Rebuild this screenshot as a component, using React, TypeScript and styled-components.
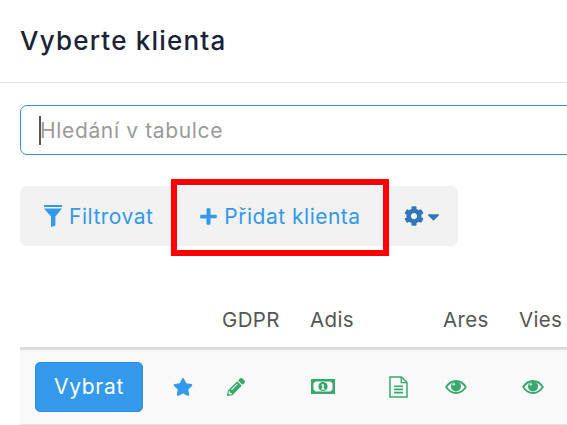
import React from 'react'
import styled, { createGlobalStyle } from 'styled-components'
import { FaCog, FaCaretDown, FaStar, FaPencilAlt } from 'react-icons/fa'

const GlobalStyle = createGlobalStyle`
  html, body {
    margin: 0;
    padding: 0;
    height: 100%;
    background: #fff;
    overflow: hidden;
  }
  body {
    font-family: Inter, "Noto Sans", sans-serif;
  }
`

const Page = styled.div`
  width: 567px;
  height: 425px;
  overflow: hidden;
`

const Header = styled.header`
  height: 82px;
  padding: 0 20px;
  display: flex;
  align-items: center;
  border-bottom: 1px solid #e3e3e3;
`

const Title = styled.h1`
  margin: 0;
  font-size: 26px;
  line-height: 1;
  font-weight: 500;
  letter-spacing: 1.2px;
  color: #1a2238;
`

const Body = styled.div`
  padding: 22px 0 0 20px;
`

const SearchBox = styled.div`
  width: 600px;
  height: 50px;
  box-sizing: border-box;
  border: 1px solid #3a8fe0;
  border-radius: 7px;
  padding: 0 18px;
  display: flex;
  align-items: center;
`

const Caret = styled.span`
  width: 2px;
  height: 29px;
  margin-right: -1px;
  background: #555;
`

const Placeholder = styled.span`
  font-size: 21px;
  letter-spacing: 0.65px;
  color: #9a9a9a;
`

const Toolbar = styled.div`
  display: inline-flex;
  margin-top: 31px;
  height: 60px;
  background: #f2f2f2;
  border-radius: 7px;
`

const ToolButton = styled.div`
  position: relative;
  display: flex;
  align-items: center;
  gap: 7px;
  padding: 0 23px 0 24px;
  font-size: 21px;
  letter-spacing: 0.5px;
  color: #3498eb;
`

const SettingsButton = styled.div`
  display: flex;
  align-items: center;
  gap: 0;
  padding: 0 15px 0 20px;
  color: #2f78b8;
`

const Highlight = styled.span`
  position: absolute;
  top: -7px;
  left: -5px;
  right: -5px;
  bottom: -10px;
  border: 6px solid #ff0000;
  pointer-events: none;
`

const Grid = styled.table`
  margin-top: 41px;
  width: 547px;
  table-layout: fixed;
  border-collapse: collapse;
`

const HeadCell = styled.th<{ $w: number }>`
  width: ${p => p.$w}px;
  box-sizing: border-box;
  height: 61px;
  padding: 0 15px 16px;
  text-align: left;
  vertical-align: bottom;
  font-size: 20.5px;
  line-height: 1;
  font-weight: 400;
  letter-spacing: 0.35px;
  color: #555;
  border-bottom: 3px solid #dcdcdc;
  white-space: nowrap;
`

const Row = styled.tr`
  background: #f9f9f9;
  border-bottom: 1px solid #e3e3e3;
`

const Cell = styled.td<{ $tone?: 'green' | 'blue'; $indent?: number }>`
  height: 74px;
  padding: 0 0 0 ${p => 15 + (p.$indent ?? 0)}px;
  color: ${p => (p.$tone === 'blue' ? '#3498eb' : '#38a96c')};
  line-height: 0;
  vertical-align: middle;
`

const PickButton = styled.button`
  width: 108px;
  height: 50px;
  padding: 0;
  border: 1px solid #2f8fe6;
  border-radius: 5px;
  background: #3498eb;
  color: #fff;
  font-family: inherit;
  font-size: 21px;
  letter-spacing: 0.7px;
`

const FilterIcon = () => (
  <svg width="18" height="22" viewBox="0 0 18 22" fill="currentColor">
    <rect x="0" y="0" width="18" height="2" />
    <path d="M0 3.5h18l-6.6 8V20.5L7 22V11.5z" />
  </svg>
)

const PlusIcon = () => (
  <svg width="17" height="17" viewBox="0 0 17 17" fill="currentColor">
    <path d="M6.500 1a.8.8 0 0 1 .8-.8h2.400a.8.8 0 0 1 .8.8v5.800H16a.8.8 0 0 1 .8.8v1.800a.8.8 0 0 1-.8.8h-5.500V16a.8.8 0 0 1-.8.8H7.300a.8.8 0 0 1-.8-.8v-5.500H1a.8.8 0 0 1-.8-.8V7.600a.8.8 0 0 1 .8-.8h5.500z" />
  </svg>
)

const MoneyIcon = () => (
  <svg width="24" height="15" viewBox="0 0 24 15">
    <rect width="24" height="15" fill="currentColor" />
    <path d="M4.500 2.500h15l2 2v6l-2 2h-15l-2-2v-6z" fill="#f9f9f9" />
    <circle cx="12" cy="7.500" r="4.600" fill="currentColor" />
    <path d="M10.800 5.200h2v4.600h.9v1h-3.500v-1h1V6.400h-.9z" fill="#f9f9f9" />
  </svg>
)

const FileIcon = () => (
  <svg width="19" height="22" viewBox="0 0 19 22" fill="none" stroke="currentColor">
    <path d="M1 1h11.500L18 6.500V21H1z" strokeWidth="1.500" />
    <path d="M12.200 1v5.600h5.600" strokeWidth="1.300" />
    <path d="M5 10.200h9M5 13.400h9M5 16.600h9" strokeWidth="1.600" />
  </svg>
)

const EyeIcon = () => (
  <svg width="22" height="14" viewBox="0 0 22 14">
    <path
      d="M1.200 7C3.600 3.200 7 1 11 1s7.400 2.200 9.800 6c-2.400 3.800-5.800 6-9.800 6S3.600 10.800 1.200 7z"
      fill="none"
      stroke="currentColor"
      strokeWidth="1.800"
    />
    <circle cx="11" cy="6.400" r="5" fill="currentColor" />
    <circle cx="8.800" cy="4.200" r="1.300" fill="#cfeadb" />
  </svg>
)

const columns: { label: string; width: number }[] = [
  { label: '', width: 138 },
  { label: '', width: 49 },
  { label: 'GDPR', width: 88 },
  { label: 'Adis', width: 75 },
  { label: '', width: 58 },
  { label: 'Ares', width: 76 },
  { label: 'Vies', width: 63 },
]

export default function App() {
  return (
    <Page>
      <GlobalStyle />
      <Header>
        <Title>Vyberte klienta</Title>
      </Header>
      <Body>
        <SearchBox>
          <Caret />
          <Placeholder>Hledání v tabulce</Placeholder>
        </SearchBox>
        <Toolbar>
          <ToolButton>
            <FilterIcon />
            Filtrovat
          </ToolButton>
          <ToolButton>
            <PlusIcon />
            Přidat klienta
            <Highlight />
          </ToolButton>
          <SettingsButton>
            <FaCog size={20} />
            <FaCaretDown size={19} />
          </SettingsButton>
        </Toolbar>
        <Grid>
          <thead>
            <tr>
              {columns.map((c, i) => (
                <HeadCell key={i} $w={c.width}>{c.label}</HeadCell>
              ))}
            </tr>
          </thead>
          <tbody>
            <Row>
              <Cell><PickButton>Vybrat</PickButton></Cell>
              <Cell $tone="blue"><FaStar size={20} /></Cell>
              <Cell $indent={5}><FaPencilAlt size={18} /></Cell>
              <Cell $indent={1}><MoneyIcon /></Cell>
              <Cell $indent={4}><FileIcon /></Cell>
              <Cell $indent={2}><EyeIcon /></Cell>
              <Cell $indent={3}><EyeIcon /></Cell>
            </Row>
          </tbody>
        </Grid>
      </Body>
    </Page>
  )
}
